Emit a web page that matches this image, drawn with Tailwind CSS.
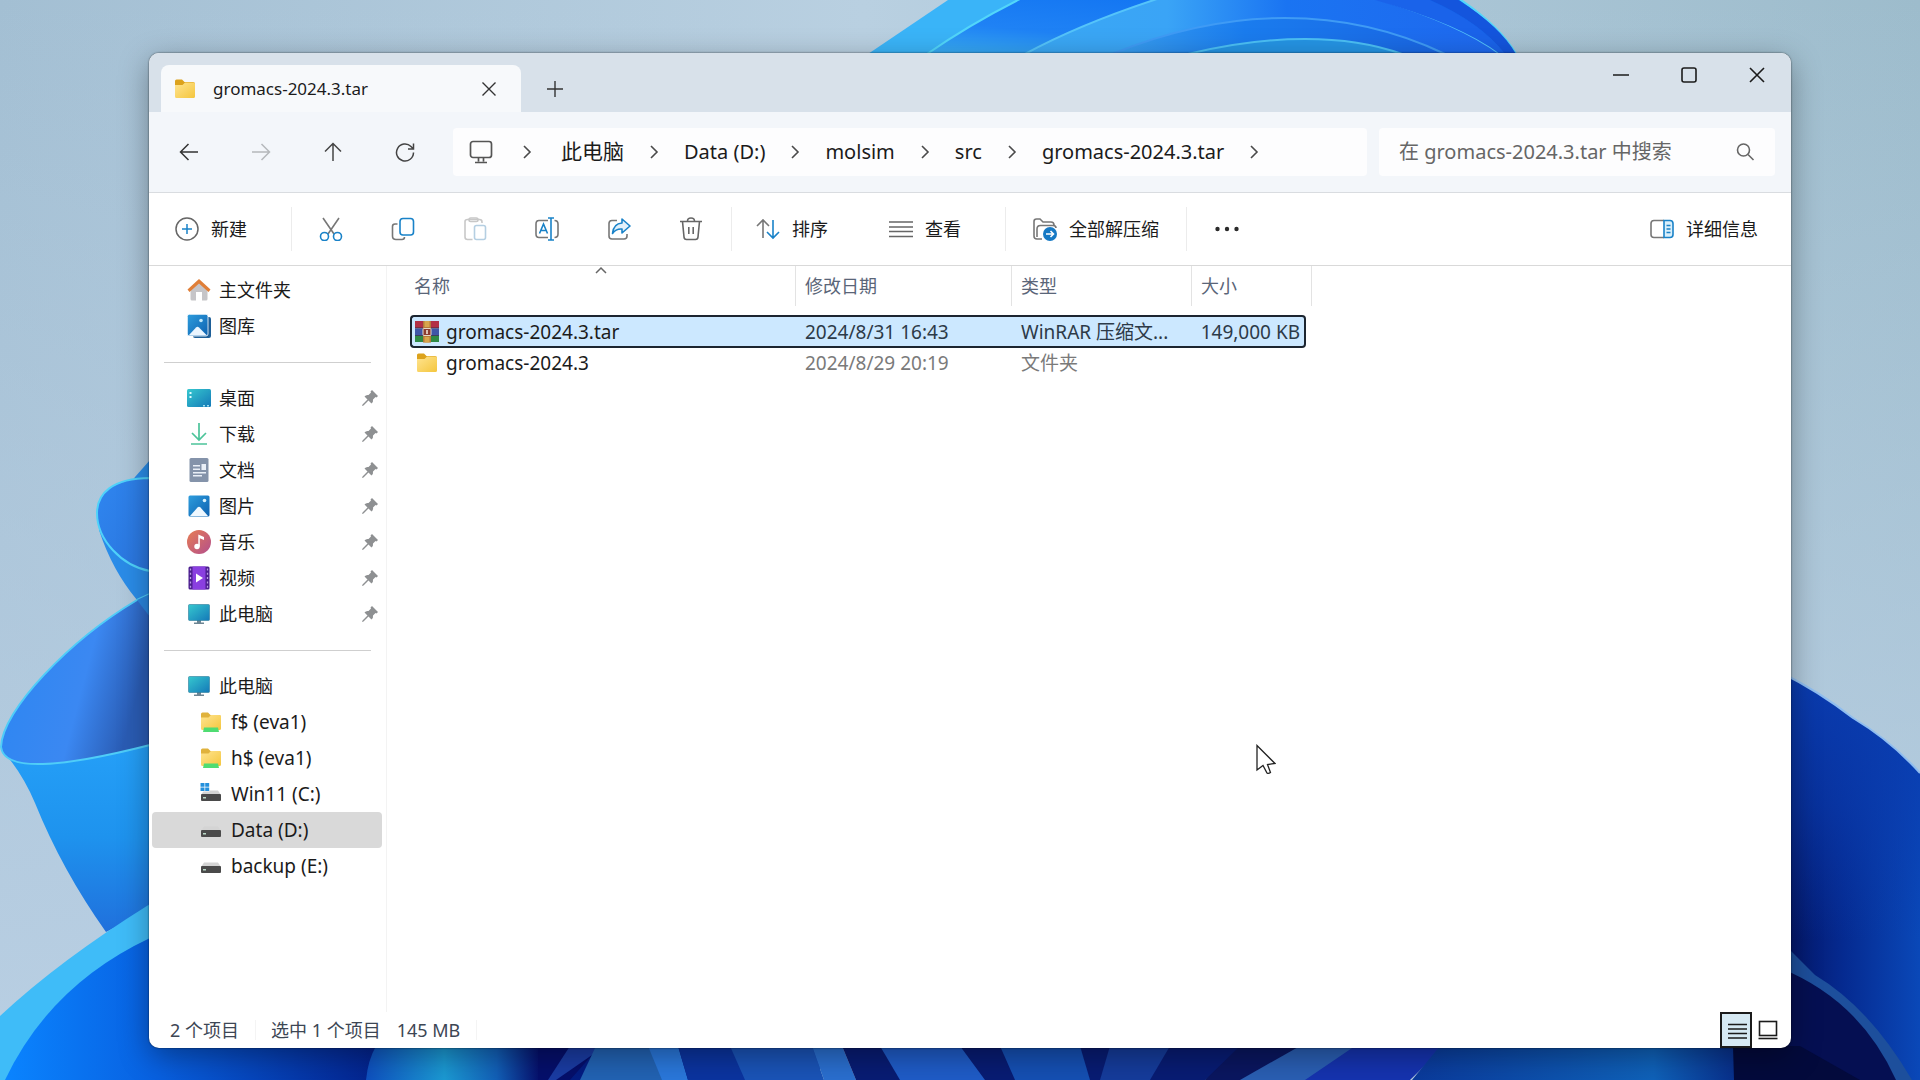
<!DOCTYPE html>
<html lang="zh-CN">
  <head>
    <meta charset="UTF-8" />
    <meta name="viewport" content="width=device-width, initial-scale=1.0" />
    <title>gromacs-2024.3.tar</title>
    <script src="https://cdn.jsdelivr.net/npm/@tailwindcss/browser@4"></script>
  </head>
  <body
    class="relative flex h-screen overflow-hidden bg-[#aec8da] pt-[53px] pr-[129px] pb-8 pl-[149px] font-['Noto_Sans','Noto_Sans_CJK_SC',sans-serif] text-lg leading-6 text-[#1b1b1b]"
  >
    <!-- wallpaper -->
    <svg class="absolute inset-0 h-full w-full" viewBox="0 0 1920 1080" preserveAspectRatio="xMidYMid slice" aria-hidden="true">
      <defs>
        <linearGradient id="sky" x1="0" y1="0" x2="1" y2="0">
          <stop offset="0" stop-color="#a3bfd3" />
          <stop offset=".45" stop-color="#b9d0e1" />
          <stop offset="1" stop-color="#9dbccc" />
        </linearGradient>
        <linearGradient id="skyFade" x1="0" y1="0" x2="0" y2="1">
          <stop offset="0" stop-color="#b9cfe3" stop-opacity="0" />
          <stop offset="1" stop-color="#b9cfe3" />
        </linearGradient>
        <linearGradient id="petalA" x1="0" y1="0" x2="1" y2="1">
          <stop offset="0" stop-color="#2f86f0" />
          <stop offset="1" stop-color="#2a74dc" />
        </linearGradient>
        <linearGradient id="petalB" x1="0" y1="0" x2="1" y2=".3">
          <stop offset="0" stop-color="#2a86f2" />
          <stop offset=".65" stop-color="#3b88f2" />
          <stop offset="1" stop-color="#2a5cb4" />
        </linearGradient>
        <linearGradient id="petalC" x1="0" y1="0" x2="0" y2="1">
          <stop offset="0" stop-color="#25a0f8" />
          <stop offset=".5" stop-color="#1e93ee" />
          <stop offset="1" stop-color="#2070dc" />
        </linearGradient>
        <linearGradient id="petalD" x1="0" y1="0" x2="1" y2="0">
          <stop offset="0" stop-color="#0a84ff" />
          <stop offset=".22" stop-color="#0860e0" />
          <stop offset=".55" stop-color="#03208a" />
          <stop offset="1" stop-color="#031a80" />
        </linearGradient>
        <linearGradient id="right" x1="0" y1="0" x2="1" y2="0">
          <stop offset="0" stop-color="#041464" />
          <stop offset=".45" stop-color="#052a90" />
          <stop offset="1" stop-color="#0a48b8" />
        </linearGradient>
        <linearGradient id="rightTop" x1="0" y1="0" x2="0" y2="1">
          <stop offset="0" stop-color="#0a3cb0" />
          <stop offset=".5" stop-color="#0a3cb0" stop-opacity=".6" />
          <stop offset="1" stop-color="#0a3cb0" stop-opacity="0" />
        </linearGradient>
        <linearGradient id="arc1" x1="0" y1="1" x2="1" y2="0">
          <stop offset="0" stop-color="#3ab0f5" />
          <stop offset=".3" stop-color="#1f82f5" />
          <stop offset="1" stop-color="#0a6cf0" />
        </linearGradient>
        <linearGradient id="arc2" x1="0" y1="0" x2="1" y2="0">
          <stop offset="0" stop-color="#3aa8f4" />
          <stop offset=".3" stop-color="#3aa4f6" />
          <stop offset=".55" stop-color="#1a74f2" />
          <stop offset="1" stop-color="#1f68ee" />
        </linearGradient>
        <linearGradient id="arc3" x1="0" y1="0" x2="1" y2="0">
          <stop offset="0" stop-color="#3aa0f0" />
          <stop offset=".4" stop-color="#1a7cee" />
          <stop offset="1" stop-color="#1a66e4" />
        </linearGradient>
        <linearGradient id="glow" x1="0" y1="0" x2="1" y2="0">
          <stop offset="0" stop-color="#0e50c0" />
          <stop offset=".45" stop-color="#1b9ad4" />
          <stop offset=".75" stop-color="#1260b8" />
          <stop offset="1" stop-color="#060f6c" />
        </linearGradient>
        <linearGradient id="floor" x1="0" y1="0" x2="1" y2="0">
          <stop offset="0" stop-color="#0a3a9c" />
          <stop offset=".75" stop-color="#0f62ba" />
          <stop offset="1" stop-color="#08308c" />
        </linearGradient>
      </defs>
      <rect width="1920" height="1080" fill="url(#sky)" />
      <rect width="1920" height="1080" fill="url(#skyFade)" />

      <!-- top bloom -->
      <path d="M948 0 868 54 1516 54Q1500 26 1458 0Z" fill="#3ab4f8" />
      <path d="M1022 -2Q970 24 927 54L1516 54Q1500 26 1458 -2Z" fill="url(#arc1)" stroke="#52d6fa" stroke-width="2" />
      <path d="M1160 -2Q1080 24 1025 54L1500 54Q1460 24 1375 -2Z" fill="url(#arc2)" stroke="#55c4fa" stroke-width="2" />
      <path d="M1375 0 1430 0Q1480 22 1505 54L1500 54Q1460 24 1375 0Z" fill="#1a63ea" />
      <path d="M1458 0Q1500 26 1516 54L1505 54Q1480 22 1430 0Z" fill="#1455dd" />
      <path d="M1112 54Q1200 18 1285 18T1445 54Z" fill="url(#arc3)" stroke="#3f9bf5" stroke-width="2" />
      <path d="M1188 54Q1250 39 1305 39T1402 54Z" fill="#2594e4" stroke="#4cc0f5" stroke-width="2" />

      <!-- left petals -->
      <path d="M135 477 150 460V640L137 600Q112 570 99 530Z" fill="#2a8ce8" />
      <path d="M150 478C112 478 97 494 97 513C97 540 122 566 150 571Z" fill="url(#petalA)" stroke="#4fd2fa" stroke-width="2" />
      <path d="M1 749Q22 772 35 803Q62 870 106 932L170 900V740Z" fill="url(#petalC)" />
      <path d="M150 594L137 600C70 640 2 710 1 747C4 772 60 768 150 745Z" fill="url(#petalB)" stroke="#4fcdf8" stroke-width="2" />
      <path d="M150 617 137 600 150 594Z" fill="#2a86e0" />
      <path d="M0 1016Q60 960 150 904V1080H0Z" fill="#3fbcf8" />
      <path d="M5 1080Q50 985 150 938L700 1030V1080Z" fill="url(#petalD)" />

      <!-- right petals -->
      <path d="M1780 672Q1820 692 1853 718Q1890 740 1920 773V1080H1780Z" fill="url(#right)" />
      <path d="M1780 672Q1820 692 1853 718Q1890 740 1920 773V940H1780Z" fill="url(#rightTop)" />
      <path d="M1780 672Q1820 692 1853 718Q1890 740 1920 773" fill="none" stroke="#8fbdf0" stroke-width="2" />
      <path d="M1780 940 1815 975Q1870 1008 1912 1080H1780Z" fill="#1d4f9c" />
      <path d="M1780 968Q1860 1000 1896 1080H1780Z" fill="#050f52" />

      <!-- strip under the window -->
      <path d="M376 1046H540V1080H366Q368 1060 376 1046Z" fill="url(#glow)" />
      <path d="M538 1046H600L570 1080H538Z" fill="#050f6c" />
      <path d="M570 1046H605L556 1080H548Z" fill="#1a3ca4" />
      <path d="M596 1046H652L664 1080H580Z" fill="#2263b4" />
      <path d="M648 1046H678L688 1080H662Z" fill="#2a78dc" />
      <path d="M678 1046H820V1080H688Z" fill="#0b34a0" />
      <path d="M730 1046H812L824 1080H745Z" fill="#1a54b8" />
      <path d="M812 1046H842L856 1080H824Z" fill="#2a6fd0" />
      <path d="M842 1046H1250V1080H856Z" fill="#081c74" />
      <path d="M880 1046H960L985 1080H900Z" fill="#1f5cc8" />
      <path d="M1000 1046H1080L1090 1080H1015Z" fill="#1550b4" />
      <path d="M1110 1046H1170L1150 1080H1100Z" fill="#153c9c" />
      <path d="M1250 1046H1365L1310 1080H1205Z" fill="#2a5fb4" />
      <path d="M1240 1046H1300L1240 1080H1205Z" fill="#0a1660" />
      <path d="M1355 1046H1445L1410 1080H1305Z" fill="#1533b0" />
      <path d="M1440 1046H1734V1080H1412Z" fill="url(#floor)" />
      <path d="M1733 1046H1800L1860 1080H1734Z" fill="#030a3c" />
    </svg>

    <!-- shared icons -->
    <svg class="absolute size-0" aria-hidden="true">
      <defs>
        <linearGradient id="folderFill" x1="0" y1="0" x2="1" y2="1">
          <stop offset="0" stop-color="#ffe490" />
          <stop offset="1" stop-color="#f4c63e" />
        </linearGradient>
        <linearGradient id="teal" x1="0" y1="0" x2="1" y2="1">
          <stop offset="0" stop-color="#36c8cf" />
          <stop offset="1" stop-color="#1479b8" />
        </linearGradient>
        <linearGradient id="blueFill" x1="0" y1="0" x2="1" y2="1">
          <stop offset="0" stop-color="#2e9ddd" />
          <stop offset="1" stop-color="#0d61b0" />
        </linearGradient>
        <linearGradient id="music" x1="0" y1="0" x2="1" y2="1">
          <stop offset="0" stop-color="#e77d54" />
          <stop offset="1" stop-color="#b34f8c" />
        </linearGradient>
      </defs>
      <symbol id="chevron" viewBox="0 0 10 16">
        <path d="m2 2 6 6-6 6" fill="none" stroke="#4a4a4a" stroke-width="1.6" />
      </symbol>
      <symbol id="pin" viewBox="0 0 16 16">
        <path d="M10 0 16 6 14.500 7.500 13.500 7 11 9.500Q11.500 12 9.500 13.500L6.500 10.500 1.500 15.500 0 16 .5 14.500 5.500 9.500 2.500 6.500Q4 4.500 6.500 5L9 2.500 8.500 1.500Z" fill="#8e9092" />
      </symbol>
      <symbol id="folder" viewBox="0 0 24 24">
        <path d="M2 4Q2 2.500 3.500 2.500H9L11.500 5H20Q22 5 22 7V12H2Z" fill="#dca21c" />
        <path d="M2 8H9.500L12 5.500H20.500Q22 5.500 22 7V19.500Q22 21 20.500 21H3.500Q2 21 2 19.500Z" fill="url(#folderFill)" />
      </symbol>
      <symbol id="netfolder" viewBox="0 0 24 24">
        <path d="M2 4Q2 2.500 3.500 2.500H9L11.500 5H20Q22 5 22 7V12H2Z" fill="#e0b23c" />
        <path d="M2 7.500H9.500L12 5H20.500Q22 5 22 6.500V18.500Q22 20 20.500 20H3.500Q2 20 2 18.500Z" fill="url(#folderFill)" />
        <path d="M5 17.500H19L20 22H4Z" fill="#4fdc72" />
      </symbol>
      <symbol id="pc" viewBox="0 0 24 24">
        <path d="M10 18H14V20.500H17V22H7V20.500H10Z" fill="#6d8593" />
        <rect x="1.500" y="2.500" width="21" height="16" rx="1" fill="url(#teal)" stroke="#2d7c9b" stroke-width=".6" />
      </symbol>
      <symbol id="drive" viewBox="0 0 24 24">
        <path d="M5 8.500H19L22 13H2Z" fill="#d4d4d4" />
        <rect x="2" y="12" width="20" height="7" rx="1" fill="#4a4a4a" />
        <rect x="4" y="15" width="3" height="1.500" fill="#b9d8c6" />
      </symbol>
    </svg>

    <main class="relative flex min-w-0 flex-1 flex-col overflow-hidden rounded-[10px] bg-white shadow-[0_8px_30px_rgba(0,0,0,0.35),0_0_2px_rgba(0,0,0,0.7)]">
      <!-- title bar -->
      <header class="flex h-[59px] shrink-0 items-start bg-[#d8e1ea]">
        <div class="mt-3 ml-3 flex h-[47px] w-[360px] items-center rounded-t-lg bg-[#f7f9fb] pr-5 pl-3">
          <svg class="size-6"><use href="#folder" /></svg>
          <span class="ml-4 flex-1 text-[17px]">gromacs-2024.3.tar</span>
          <button class="p-1" aria-label="关闭标签页">
            <svg class="size-4" viewBox="0 0 16 16" fill="none" stroke="#333" stroke-width="1.4"><path d="m1.500 1.500 13 13m0-13-13 13" /></svg>
          </button>
        </div>
        <button class="mt-6 ml-[22px] p-1" aria-label="新建标签页">
          <svg class="size-4" viewBox="0 0 16 16" fill="none" stroke="#333" stroke-width="1.4"><path d="M8 0v16M0 8h16" /></svg>
        </button>
        <div class="ml-auto flex">
          <button class="flex h-11 w-[68px] items-center justify-center" aria-label="最小化">
            <svg class="size-4" viewBox="0 0 16 16" fill="none" stroke="#1b1b1b" stroke-width="1.6"><path d="M0 8h16" /></svg>
          </button>
          <button class="flex h-11 w-[68px] items-center justify-center" aria-label="最大化">
            <svg class="size-4" viewBox="0 0 16 16" fill="none" stroke="#1b1b1b" stroke-width="1.6"><rect x="1" y="1" width="14" height="14" rx="2" /></svg>
          </button>
          <button class="flex h-11 w-[68px] items-center justify-center" aria-label="关闭">
            <svg class="size-4" viewBox="0 0 16 16" fill="none" stroke="#1b1b1b" stroke-width="1.6"><path d="m1 1 14 14M15 1 1 15" /></svg>
          </button>
        </div>
      </header>

      <!-- address bar -->
      <div class="flex h-[81px] shrink-0 items-center border-b border-[#d9dce0] bg-[#f3f6fa] pr-4 pl-1 text-xl">
        <nav class="flex" aria-label="导航">
          <button class="flex h-11 w-[72px] items-center justify-center" aria-label="后退">
            <svg class="size-5" viewBox="0 0 20 20" fill="none" stroke="#333" stroke-width="1.5"><path d="M19 10H1.500M9.500 2l-8 8 8 8" /></svg>
          </button>
          <button class="flex h-11 w-[72px] items-center justify-center" aria-label="前进">
            <svg class="size-5" viewBox="0 0 20 20" fill="none" stroke="#b5b8bb" stroke-width="1.5"><path d="M1 10h17.500M10.500 2l8 8-8 8" /></svg>
          </button>
          <button class="flex h-11 w-[72px] items-center justify-center" aria-label="上移">
            <svg class="size-5" viewBox="0 0 20 20" fill="none" stroke="#444" stroke-width="1.5"><path d="M10 19V1.500M2 9.500l8-8 8 8" /></svg>
          </button>
          <button class="flex h-11 w-[72px] items-center justify-center" aria-label="刷新">
            <svg class="size-5" viewBox="0 0 20 20" fill="none" stroke="#444" stroke-width="1.5"><path d="M18.500 10.500A8.500 8.500 0 1 1 16 4.500L18 6.500M18.500 1.500V7H13" /></svg>
          </button>
        </nav>
        <div class="ml-3 flex h-12 min-w-0 flex-1 items-center rounded bg-[#fdfdfe] pl-4 whitespace-nowrap">
          <svg class="size-6" viewBox="0 0 24 24" fill="none" stroke="#555" stroke-width="1.7"><rect x="1.500" y="1.500" width="21" height="16" rx="2.500" /><path d="M9.500 18v3.500m5-3.500v3.500M6 22.500h12" /></svg>
          <svg class="mx-[29px] h-4 w-2.5"><use href="#chevron" /></svg>
          <a href="#" class="text-[21px]">此电脑</a>
          <svg class="mx-[25px] h-4 w-2.5"><use href="#chevron" /></svg>
          <a href="#">Data (D:)</a>
          <svg class="mx-[25px] h-4 w-2.5"><use href="#chevron" /></svg>
          <a href="#">molsim</a>
          <svg class="mx-[25px] h-4 w-2.5"><use href="#chevron" /></svg>
          <a href="#">src</a>
          <svg class="mx-[25px] h-4 w-2.5"><use href="#chevron" /></svg>
          <a href="#">gromacs-2024.3.tar</a>
          <svg class="mx-[25px] h-4 w-2.5"><use href="#chevron" /></svg>
        </div>
        <label class="ml-3 flex h-12 w-[396px] items-center rounded bg-[#fdfdfe] pr-5 pl-5">
          <input
            class="min-w-0 flex-1 outline-none placeholder:text-[#666]"
            type="text"
            aria-label="搜索"
            placeholder="在 gromacs-2024.3.tar 中搜索"
          />
          <svg class="size-5" viewBox="0 0 20 20" fill="none" stroke="#666" stroke-width="1.6"><circle cx="8.500" cy="8" r="6" /><path d="m13 12.500 5.500 5.500" /></svg>
        </label>
      </div>

      <!-- command bar -->
      <div class="flex h-[73px] shrink-0 items-center border-b border-[#d9d9d9] bg-white whitespace-nowrap">
        <button class="flex w-[142px] items-center gap-3 pl-[26px]">
          <svg class="size-6" viewBox="0 0 24 24" fill="none" stroke-width="1.5"><circle cx="12" cy="12" r="11" stroke="#666" /><path d="M12 7v10M7 12h10" stroke="#1982c8" /></svg>
          新建
        </button>
        <div class="h-11 w-px bg-[#ececec]"></div>
        <div class="flex pl-[3px]">
          <button class="flex h-11 w-[72px] items-center justify-center" aria-label="剪切">
            <svg class="size-6" viewBox="0 0 24 24" fill="none" stroke-width="1.6"><path d="m4 1 11 16M20 1 9 17" stroke="#777" /><circle cx="5.500" cy="19.500" r="4" stroke="#1982c8" /><circle cx="18.500" cy="19.500" r="4" stroke="#1982c8" /></svg>
          </button>
          <button class="flex h-11 w-[72px] items-center justify-center" aria-label="复制">
            <svg class="size-6" viewBox="0 0 24 24" fill="none" stroke-width="1.6"><path d="M6.500 7H4Q1.500 7 1.500 9.500V19Q1.500 22.500 5 22.500H11Q13.500 22.500 13.500 20" stroke="#777" /><rect x="9" y="1.500" width="13.500" height="16.500" rx="3" stroke="#1982c8" /></svg>
          </button>
          <button class="flex h-11 w-[72px] items-center justify-center" aria-label="粘贴">
            <svg class="size-6" viewBox="0 0 24 24" fill="none" stroke-width="1.6"><path d="M9.500 22.500H4.500Q2 22.500 2 20V4.500Q2 2.500 4.500 2.500H16.500Q19 2.500 19 5V6" stroke="#c8c8c8" /><rect x="6" y="1" width="9" height="3.500" rx="1.700" stroke="#c8c8c8" /><rect x="11.500" y="8.500" width="11" height="14" rx="2" stroke="#b5cfe2" /></svg>
          </button>
          <button class="flex h-11 w-[72px] items-center justify-center" aria-label="重命名">
            <svg class="size-6" viewBox="0 0 24 24" fill="none" stroke-width="1.6"><path d="M13 3.500H4Q1 3.500 1 7V17Q1 20.500 4 20.500H13M19.500 3.500Q23 3.500 23 7V17Q23 20.500 19.500 20.500" stroke="#777" /><path d="M4.500 16.500 8.500 7 12.500 16.500M6 13.500H11M16 1V23M13 1H19M13 23H19" stroke="#1982c8" /></svg>
          </button>
          <button class="flex h-11 w-[72px] items-center justify-center" aria-label="共享">
            <svg class="size-6" viewBox="0 0 24 24" fill="none" stroke-width="1.6"><path d="M10 3.500H5Q2 3.500 2 6.500V19Q2 22 5 22H17Q20 22 20 19V17" stroke="#777" /><path d="M15 2 23 9 15 16V12Q9 11.500 5.500 16.500Q6.500 6.500 15 6Z" stroke="#1982c8" fill="#e2f1fb" stroke-linejoin="round" /></svg>
          </button>
          <button class="flex h-11 w-[72px] items-center justify-center" aria-label="删除">
            <svg class="size-6" viewBox="0 0 24 24" fill="none" stroke="#666" stroke-width="1.6"><path d="M1 4.500H23M3.500 4.500 5 20Q5.200 22.500 7.500 22.500H16.500Q18.800 22.500 19 20L20.500 4.500M8.500 4Q8.500 1 12 1T15.500 4M9.800 10V17M14.200 10V17" /></svg>
          </button>
        </div>
        <div class="ml-1 h-11 w-px bg-[#ececec]"></div>
        <button class="ml-6 flex items-center gap-3">
          <svg class="size-6" viewBox="0 0 24 24" fill="none" stroke-width="1.6"><path d="M7 21V3M1 9l6-6 6 6" stroke="#777" /><path d="M17 3v18m-6-6 6 6 6-6" stroke="#1982c8" /></svg>
          排序
        </button>
        <button class="ml-[61px] flex items-center gap-3">
          <svg class="size-6" viewBox="0 0 24 24" fill="none" stroke="#666" stroke-width="1.5"><path d="M0 5h24M0 10h24M0 14.500h24M0 19.500h24" /></svg>
          查看
        </button>
        <div class="ml-11 h-11 w-px bg-[#ececec]"></div>
        <button class="ml-[27px] flex items-center gap-3">
          <svg class="size-6" viewBox="0 0 24 24" fill="none" stroke="#777" stroke-width="1.6"><path d="M9 22H4Q1 22 1 19V4.500Q1 2 3.500 2H7L10 5H18Q21 5 21 8M4 20V12Q4 8.500 7.500 8.500H20Q23 8.500 23 11" /><circle cx="17" cy="17" r="7" fill="#1679c4" stroke="none" /><path d="M13 17h7.500m-3-3 3 3-3 3" stroke="#fff" /></svg>
          全部解压缩
        </button>
        <div class="ml-[27px] h-11 w-px bg-[#ececec]"></div>
        <button class="ml-6 p-1" aria-label="更多">
          <svg class="h-5 w-6" viewBox="0 0 24 20" fill="#2b2b2b"><circle cx="2.500" cy="10" r="2.200" /><circle cx="12" cy="10" r="2.200" /><circle cx="21.500" cy="10" r="2.200" /></svg>
        </button>
        <button class="mr-[33px] ml-auto flex items-center gap-3">
          <svg class="size-6" viewBox="0 0 24 24" fill="none" stroke-width="1.6"><path d="M14 3.500H4Q1 3.500 1 6.500V17.500Q1 20.500 4 20.500H14" stroke="#777" /><path d="M14 3.500H20Q23 3.500 23 6.500V17.500Q23 20.500 20 20.500H14Z" stroke="#1982c8" fill="#d9effb" /><path d="M16.500 8.500h4M16.500 12h4m-4 3.500h4" stroke="#1982c8" /></svg>
          详细信息
        </button>
      </div>

      <div class="flex min-h-0 flex-1">
        <!-- sidebar -->
        <aside class="w-[238px] shrink-0 border-r border-[#f3f3f3] pt-1.5 pr-1 pl-[3px]">
          <ul>
            <li>
              <a href="#" class="flex h-9 items-center gap-2 pl-[35px]">
                <svg class="size-6" viewBox="0 0 24 24"><path d="M3.500 10 12 3 20.500 10V21Q20.500 22.500 19 22.500H15V14H9V22.500H5Q3.500 22.500 3.500 21Z" fill="#c6c5c8" /><path d="M12 1 23.500 11.500 21.500 14 12 5.500 2.500 14 .5 11.500Z" fill="#e07f38" /></svg>
                主文件夹
              </a>
            </li>
            <li>
              <a href="#" class="flex h-9 items-center gap-2 pl-[35px]">
                <svg class="size-6" viewBox="0 0 24 24"><path d="M6 3H22Q24 3 24 5V22Q24 24 22 24H8Q6 24 6 22Z" fill="#1e5f98" /><rect x=".3" y=".3" width="20.700" height="21.700" rx="2" fill="url(#blueFill)" stroke="#fff" stroke-width=".8" /><path d="m1.500 21.500 7.500-8Q10.500 12 12 13.500L20 21.500Z" fill="#eaf5ff" /><circle cx="14" cy="6.500" r="1.800" fill="#bfe8fb" /></svg>
                图库
              </a>
            </li>
          </ul>
          <hr class="mt-[18px] mr-[11px] mb-[17px] ml-3 border-[#cfcfcf]" />
          <ul>
            <li>
              <a href="#" class="flex h-9 items-center gap-2 pr-1 pl-[35px]">
                <svg class="size-6" viewBox="0 0 24 24"><rect y="3" width="24" height="18" rx="1.500" fill="url(#teal)" /><path d="M2.500 6h2v2h-2zM2.500 10h2v2h-2z" fill="#dffaff" /><path d="M16 19h2v1.500h-2zM20 19h2v1.500h-2z" fill="#9fe0f0" /></svg>
                <span class="flex-1">桌面</span>
                <svg class="size-4"><use href="#pin" /></svg>
              </a>
            </li>
            <li>
              <a href="#" class="flex h-9 items-center gap-2 pr-1 pl-[35px]">
                <svg class="size-6" viewBox="0 0 24 24" fill="none" stroke="#4cc49a" stroke-width="1.7"><path d="M12 1v17m-7-7 7 7 7-7M4 22h16" /></svg>
                <span class="flex-1">下载</span>
                <svg class="size-4"><use href="#pin" /></svg>
              </a>
            </li>
            <li>
              <a href="#" class="flex h-9 items-center gap-2 pr-1 pl-[35px]">
                <svg class="size-6" viewBox="0 0 24 24"><rect x="2.500" y="0" width="19" height="24" rx="1.500" fill="#8493aa" /><path d="M6 7h7v1.500H6zM6 10.500h7V12H6zM14.500 6H19v6h-4.500zM6 14h13v1.500H6zM6 17h9v1.500H6z" fill="#e9eff7" /></svg>
                <span class="flex-1">文档</span>
                <svg class="size-4"><use href="#pin" /></svg>
              </a>
            </li>
            <li>
              <a href="#" class="flex h-9 items-center gap-2 pr-1 pl-[35px]">
                <svg class="size-6" viewBox="0 0 24 24"><rect x="1.500" y="1.500" width="21" height="21" rx="1.500" fill="url(#blueFill)" /><path d="m3 22 7.500-8.500Q12 12 13.500 13.500L21 22Z" fill="#eff8ff" /><circle cx="17.500" cy="6.500" r="1.800" fill="#d6f1fd" /></svg>
                <span class="flex-1">图片</span>
                <svg class="size-4"><use href="#pin" /></svg>
              </a>
            </li>
            <li>
              <a href="#" class="flex h-9 items-center gap-2 pr-1 pl-[35px]">
                <svg class="size-6" viewBox="0 0 24 24"><circle cx="12" cy="12" r="12" fill="url(#music)" /><circle cx="10" cy="16.500" r="2.700" fill="#fff" /><path d="M11.300 4.500 17 7V10L12.800 8.200V16.500H11.300Z" fill="#fff" /></svg>
                <span class="flex-1">音乐</span>
                <svg class="size-4"><use href="#pin" /></svg>
              </a>
            </li>
            <li>
              <a href="#" class="flex h-9 items-center gap-2 pr-1 pl-[35px]">
                <svg class="size-6" viewBox="0 0 24 24"><rect x="1.500" y=".5" width="21" height="23" rx="1.500" fill="#4b1d8f" /><rect x="5.500" y=".5" width="13" height="23" fill="#8a3fe0" /><path d="M3.500 2.500V22M20.500 2.500V22" stroke="#b99ae6" stroke-width="1.300" stroke-dasharray="2 2.300" /><path d="M9 7.500 16 12 9 16.500Z" fill="#fff" /></svg>
                <span class="flex-1">视频</span>
                <svg class="size-4"><use href="#pin" /></svg>
              </a>
            </li>
            <li>
              <a href="#" class="flex h-9 items-center gap-2 pr-1 pl-[35px]">
                <svg class="size-6"><use href="#pc" /></svg>
                <span class="flex-1">此电脑</span>
                <svg class="size-4"><use href="#pin" /></svg>
              </a>
            </li>
          </ul>
          <hr class="mt-[18px] mr-[11px] mb-[17px] ml-3 border-[#cfcfcf]" />
          <a href="#" class="flex h-9 items-center gap-2 pl-[35px]"><svg class="size-6"><use href="#pc" /></svg>此电脑</a>
          <ul class="text-[19px]">
            <li>
              <a href="#" class="flex h-9 items-center gap-2 pl-[47px]"><svg class="size-6"><use href="#netfolder" /></svg>f$ (eva1)</a>
            </li>
            <li>
              <a href="#" class="flex h-9 items-center gap-2 pl-[47px]"><svg class="size-6"><use href="#netfolder" /></svg>h$ (eva1)</a>
            </li>
            <li>
              <a href="#" class="flex h-9 items-center gap-2 pl-[47px]">
                <svg class="size-6" viewBox="0 0 24 24"><use href="#drive" width="24" height="24" /><path d="M1 .5h9.500v9H1z" fill="#fff" /><path d="M1.500 1h4v3.700h-4zM6.200 1h4v3.700h-4zM1.500 5.400h4v3.700h-4zM6.200 5.400h4v3.700h-4z" fill="#2490dc" /></svg>
                Win11 (C:)
              </a>
            </li>
            <li>
              <a href="#" class="flex h-9 items-center gap-2 rounded-sm bg-[#d9d9d9] pl-[47px]" aria-current="true"><svg class="size-6"><use href="#drive" /></svg>Data (D:)</a>
            </li>
            <li>
              <a href="#" class="flex h-9 items-center gap-2 pl-[47px]"><svg class="size-6"><use href="#drive" /></svg>backup (E:)</a>
            </li>
          </ul>
        </aside>

        <!-- file list -->
        <section class="relative min-w-0 flex-1 pl-[23px]">
          <svg class="absolute top-0 left-[208px] h-2 w-3" viewBox="0 0 12 8" fill="none" stroke="#666" stroke-width="1.5"><path d="m1 7 5-5 5 5" /></svg>
          <table class="w-[902px] table-fixed border-separate border-spacing-0 whitespace-nowrap">
            <colgroup>
              <col class="w-[386px]" />
              <col class="w-[216px]" />
              <col class="w-[180px]" />
              <col class="w-[114px]" />
              <col class="w-1.5" />
            </colgroup>
            <thead class="text-left text-[#5a6578]">
              <tr>
                <th class="p-0 pb-[9px] font-normal"><div class="flex h-10 items-center border-r border-[#e3e3e3] pl-1">名称</div></th>
                <th class="p-0 pb-[9px] font-normal"><div class="flex h-10 items-center border-r border-[#e3e3e3] pl-[9px]">修改日期</div></th>
                <th class="p-0 pb-[9px] font-normal"><div class="flex h-10 items-center border-r border-[#e3e3e3] pl-[9px]">类型</div></th>
                <th class="p-0 pb-[9px] font-normal" colspan="2"><div class="flex h-10 items-center border-r border-[#e3e3e3] pl-[9px]">大小</div></th>
              </tr>
            </thead>
            <tbody class="text-[19px]">
              <tr>
                <td class="h-[33px] rounded-l-sm border-y-2 border-l-2 border-[#1c2530] bg-[#cce8ff] p-0">
                  <div class="flex items-center gap-[7px] pl-[3px]">
                    <svg class="size-6" viewBox="0 0 24 24"><path d="M0 1h24v7H0z" fill="#b23045" /><path d="M0 8.500h24v7H0z" fill="#3f56a8" /><path d="M0 16h24v6H0z" fill="#2f8a45" /><path d="M0 8h24M0 15.500h24" stroke="#2b2740" stroke-width=".8" /><path d="M8 1h8v21.500H8z" fill="#b5793a" /><path d="M9.500 1h5v6h-5zM9.500 17h5v5.500h-5z" fill="#d8a54c" /><rect x="8" y="8.500" width="8" height="7" rx="1" fill="#8d3b30" stroke="#e6d9c8" /><path d="M12 10v4" stroke="#f5efe2" stroke-width="1.500" /></svg>
                    gromacs-2024.3.tar
                  </div>
                </td>
                <td class="border-y-2 border-[#1c2530] bg-[#cce8ff] p-0 pl-[9px] text-[#2c3a48]">2024/8/31 16:43</td>
                <td class="border-y-2 border-[#1c2530] bg-[#cce8ff] p-0 pl-[9px] text-[#2c3a48]">WinRAR 压缩文...</td>
                <td class="rounded-r-sm border-y-2 border-r-2 border-[#1c2530] bg-[#cce8ff] p-0 pr-1 text-right text-[#2c3a48]">149,000 KB</td>
                <td></td>
              </tr>
              <tr>
                <td class="h-[30px] p-0">
                  <div class="flex items-center gap-[7px] pl-[5px]"><svg class="size-6"><use href="#folder" /></svg>gromacs-2024.3</div>
                </td>
                <td class="p-0 pl-[9px] text-[#7a7a7a]">2024/8/29 20:19</td>
                <td class="p-0 pl-[9px] text-[#7a7a7a]">文件夹</td>
                <td></td>
                <td></td>
              </tr>
            </tbody>
          </table>
        </section>
      </div>

      <!-- status bar -->
      <footer class="flex h-9 shrink-0 items-center pr-[13px] pl-[21px] text-[#3d4654]">
        <span>2 个项目</span>
        <span class="ml-4 h-5 w-px bg-[#f4f4f4]"></span>
        <span class="ml-[15px]">选中 1 个项目</span>
        <span class="ml-4">145 MB</span>
        <span class="ml-4 h-5 w-px bg-[#f4f4f4]"></span>
        <button class="ml-auto flex h-9 w-8 items-center justify-end border-2 border-[#1b1b1b] bg-[#d6e9f3] pr-px" aria-label="详细信息视图">
          <svg class="h-5 w-[22px]" viewBox="0 0 22 20" fill="none" stroke="#1b1b1b" stroke-width="1.500"><path d="M1 4.500h19M1 9h19M1 13.500h19M1 18h19" /></svg>
        </button>
        <button class="ml-1.5 flex items-center" aria-label="缩略图视图">
          <svg class="size-5" viewBox="0 0 20 20" fill="none" stroke="#1b1b1b" stroke-width="1.600"><rect x="1.500" y="1.500" width="17" height="14" /><path d="M.5 18.500h19" /></svg>
        </button>
      </footer>
    </main>

    <!-- pointer -->
    <svg class="absolute top-[744px] left-[1256px] h-[31px] w-5" viewBox="0 0 20 31" fill="#fff" stroke="#222" stroke-width="1.300"><path d="M1 1.500V26L7 21.500 11 29Q12.500 30 14.500 28.500L11.500 20.500 19 19.500Z" /></svg>
  </body>
</html>
